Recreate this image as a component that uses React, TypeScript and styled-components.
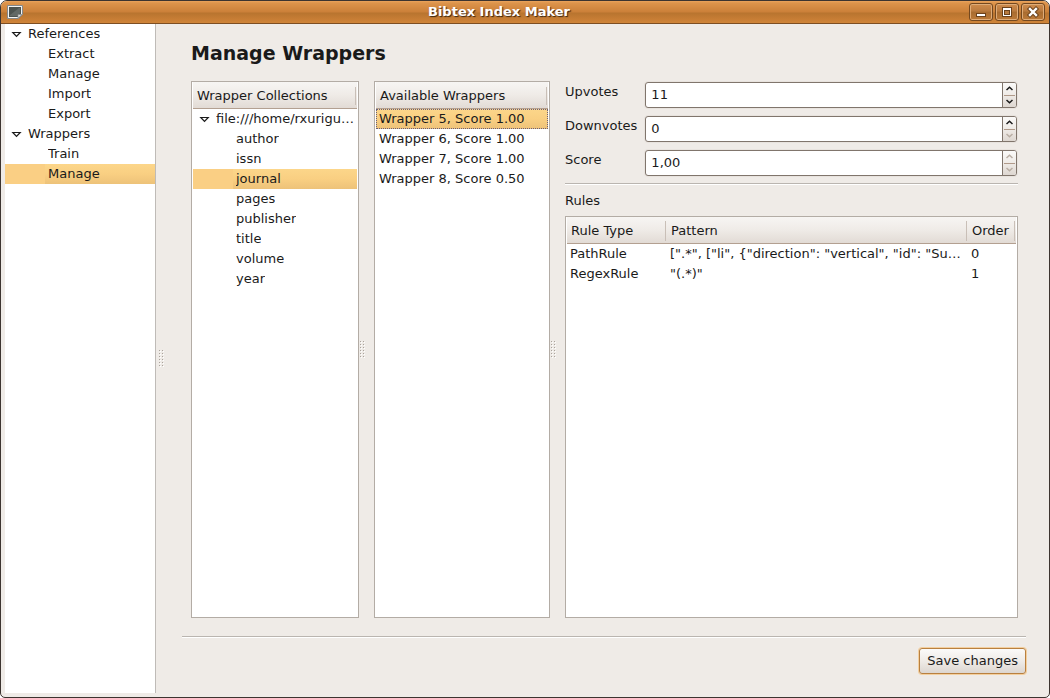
import React, { useState } from "react";
import styled, { createGlobalStyle, css } from "styled-components";

const GlobalStyle = createGlobalStyle`
  *, *::before, *::after { box-sizing: border-box; }
  body { margin: 0; background: #fff; }
  body, button, input, table {
    font-family: "DejaVu Sans", sans-serif;
    font-size: 13px;
    line-height: 20px;
    color: #1a1a1a;
  }
  button { margin: 0; padding: 0; border: 0; background: none; text-align: left; }
`;

const Window = styled.div`
  display: flex;
  flex-direction: column;
  min-height: 100vh;
  border: 1px solid #3c3430;
  border-radius: 7px 7px 5px 5px;
  background: #efebe7;
  overflow: hidden;
`;

const TitleBar = styled.header`
  display: flex;
  align-items: center;
  height: 23px;
  padding: 0 4px 0 6px;
  border-bottom: 1px solid #7d4e22;
  background: linear-gradient(#eaa45c 0, #dd944b 2px, #cb8039 11px, #b8742f 12px, #c97f36 19px, #d08539 22px);
`;

const WindowTitle = styled.div`
  flex: 1;
  padding-left: 6px;
  color: #fff;
  font-weight: bold;
  text-align: center;
  text-shadow: 1px 1px 1px #3a2410;
`;

const WindowButtons = styled.div`
  display: flex;
  gap: 2px;
`;

const WindowButton = styled.button`
  display: flex;
  width: 24px;
  height: 18px;
  border: 1px solid #74481f;
  border-radius: 3px;
  background: linear-gradient(#cf8c4c, #ba7a3e 45%, #a86c30 50%, #bd7a38);
  box-shadow: inset 0 0 0 1px #dfac78;
`;

const Body = styled.div`
  display: flex;
  flex: 1;
  padding: 0 4px 4px 4px;
`;

const Sidebar = styled.nav`
  flex: 0 0 151px;
  border-right: 1px solid #bfbbb7;
  background: #fff;
`;

const Splitter = styled.div<{ $inset: number }>`
  display: flex;
  flex: 0 0 15px;
  align-items: center;
  padding-left: ${(p) => p.$inset}px;
`;

const Content = styled.main`
  display: flex;
  flex: 1;
  flex-direction: column;
  min-width: 0;
  padding: 0 19px 19px 11px;
`;

const Heading = styled.h1`
  margin: 0 0 0 9px;
  padding: 16px 0 15px;
  font-size: 19px;
  line-height: 26px;
`;

const Panes = styled.div`
  display: flex;
  flex: 1;
  margin: 0 8px 18px 9px;
`;

const Panel = styled.section<{ $width?: number }>`
  flex: ${(p) => (p.$width ? `0 0 ${p.$width}px` : "1")};
  min-width: 0;
  border: 1px solid #b3aca5;
  background: #fff;
  padding: 0 1px;
`;

const headerFill = css`
  height: 27px;
  border-bottom: 1px solid #b3a091;
  background: linear-gradient(#f7f5f3, #efebe7 50%, #e2dbd5);
  font-weight: normal;
  text-align: left;
`;

const PanelHeader = styled.h2`
  ${headerFill}
  display: flex;
  align-items: center;
  justify-content: space-between;
  margin: 0;
  padding: 2px 0 0 4px;
  font-size: 13px;
  &::after {
    content: "";
    width: 2px;
    height: 18px;
    border-left: 1px solid #c9bfb7;
  }
`;

const Tree = styled.ul`
  margin: 0;
  padding: 0;
  list-style: none;
`;

const TreeRow = styled.button<{ $level: number; $selected?: boolean }>`
  display: flex;
  align-items: center;
  width: 100%;
  height: 20px;
  padding-left: ${(p) => (p.$level ? 43 : 6)}px;
  white-space: nowrap;
  ${(p) =>
    p.$selected &&
    css`
      background: linear-gradient(#fcd68a, #f9cf82 50%, #edc279) 40px 0 no-repeat #facf84;
    `}
`;

const TreeLabel = styled.span`
  overflow: hidden;
  text-overflow: ellipsis;
`;

const Arrow = styled.svg`
  flex: none;
  width: 11px;
  height: 9px;
  margin-right: 6px;
`;

const ListRow = styled.button<{ $selected?: boolean }>`
  display: block;
  width: 100%;
  height: 20px;
  padding-left: 3px;
  white-space: nowrap;
  ${(p) =>
    p.$selected &&
    css`
      background: linear-gradient(#fcd68a, #f9cf82 50%, #edc279);
      outline: 1px dotted #6b5f78;
      outline-offset: -1px;
    `}
`;

const Details = styled.div`
  display: flex;
  flex: 1;
  flex-direction: column;
  min-width: 0;
`;

const Fields = styled.div`
  display: grid;
  grid-template-columns: auto 1fr;
  gap: 7px 8px;
  padding-bottom: 7px;
`;

const FieldLabel = styled.label`
  padding-top: 1px;
`;

const Spin = styled.div`
  display: flex;
  height: 26px;
  margin: 1px 1px 0 0;
  border: 1px solid #80756c;
  border-radius: 3px;
  background: #fff;
  box-shadow: 0 0 0 1px #e8e3de;
`;

const SpinInput = styled.input`
  flex: 1;
  min-width: 0;
  padding: 0 5px;
  border: 0;
  outline: 0;
  background: transparent;
`;

const SpinButtons = styled.div`
  display: flex;
  flex: 0 0 14px;
  flex-direction: column;
  border-left: 1px solid #80756c;
  border-radius: 0 2px 2px 0;
  background: linear-gradient(#fbfaf9, #efebe7 50%, #ded7d1);
`;

const SpinButton = styled.button`
  display: flex;
  flex: 1;
  align-items: center;
  justify-content: center;
  color: #1a1a1a;
  &:disabled { color: #b9aea4; }
  & + & {
    margin: 0 1px;
    border-top: 1px solid #b09a8a;
  }
`;

const Rule = styled.hr`
  width: 100%;
  height: 2px;
  margin: 0;
  border: 0;
  border-top: 1px solid #bab5b0;
  border-bottom: 1px solid #fff;
`;

const RulesTitle = styled.h2`
  margin: 0;
  padding: 6px 0 5px;
  font-size: 13px;
  font-weight: normal;
`;

const RulesTable = styled.table`
  width: 100%;
  table-layout: fixed;
  border-collapse: separate;
  border-spacing: 0;
`;

const HeadCell = styled.th<{ $width?: number }>`
  ${headerFill}
  width: ${(p) => (p.$width ? `${p.$width}px` : "auto")};
  padding: 2px 1px 0 0;
  & > span {
    display: block;
    height: 20px;
    padding-left: 4px;
    border-right: 1px solid #c9bfb7;
  }
`;

const Cell = styled.td`
  height: 20px;
  padding: 0 5px 0 3px;
  overflow: hidden;
  text-overflow: ellipsis;
  white-space: nowrap;
`;

const Footer = styled.footer`
  display: flex;
  justify-content: flex-end;
  padding-top: 10px;
`;

const SaveButton = styled.button`
  height: 26px;
  padding: 0 7px;
  border: 1px solid #b9803f;
  border-radius: 3px;
  background: linear-gradient(#fbfaf9, #efebe7 50%, #ddd6d0);
  box-shadow: 0 0 0 1px #f3cf9f;
`;

function Grip() {
  return (
    <svg width="5" height="17" aria-hidden="true">
      {[0, 3, 6, 9, 12, 15].map((y) =>
        [0, 3].map((x) => (
          <g key={`${x}-${y}`}>
            <rect x={x + 1} y={y + 1} width="1" height="1" fill="#fff" />
            <rect x={x} y={y} width="1" height="1" fill="#aaa39c" />
          </g>
        ))
      )}
    </svg>
  );
}

function Expander() {
  return (
    <Arrow viewBox="0 0 11 9" aria-hidden="true">
      <path d="M1.8 2.5H9.2L5.5 6.3Z" fill="#fff" stroke="#1a1a1a" strokeWidth="1.2" />
    </Arrow>
  );
}

function AppIcon() {
  return (
    <svg width="16" height="14" viewBox="0 0 16 14" aria-hidden="true">
      <path d="M.5 .5H15.5V9.5L11.5 13.5H.5Z" fill="#f4f4f2" stroke="#85888a" />
      <path d="M2 2H14V9L11 12H2Z" fill="#4c5350" />
      <path d="M3 10L12 3H13V8L11 11H3Z" fill="#626966" />
      <path d="M11 13V9.5H15Z" fill="#dcdedd" stroke="#85888a" strokeWidth=".7" />
    </svg>
  );
}

type Node = { id: string; label: string; level: number };

const sections: Node[] = [
  { id: "references", label: "References", level: 0 },
  { id: "extract", label: "Extract", level: 1 },
  { id: "manage-references", label: "Manage", level: 1 },
  { id: "import", label: "Import", level: 1 },
  { id: "export", label: "Export", level: 1 },
  { id: "wrappers", label: "Wrappers", level: 0 },
  { id: "train", label: "Train", level: 1 },
  { id: "manage-wrappers", label: "Manage", level: 1 },
];

const collections: Node[] = [
  { id: "source", label: "file:///home/rxurigu…", level: 0 },
  ...["author", "issn", "journal", "pages", "publisher", "title", "volume", "year"].map((f) => ({
    id: f,
    label: f,
    level: 1,
  })),
];

const wrappers = [
  "Wrapper 5, Score 1.00",
  "Wrapper 6, Score 1.00",
  "Wrapper 7, Score 1.00",
  "Wrapper 8, Score 0.50",
];

const rules = [
  ["PathRule", '[".*", ["li", {"direction": "vertical", "id": "Su…', "0"],
  ["RegexRule", '"(.*)"', "1"],
];

function TreeView({ nodes, initial }: { nodes: Node[]; initial: string }) {
  const [selected, setSelected] = useState(initial);
  return (
    <Tree>
      {nodes.map((n) => (
        <li key={n.id}>
          <TreeRow
            type="button"
            $level={n.level}
            $selected={n.id === selected}
            onClick={() => setSelected(n.id)}
          >
            {n.level === 0 && <Expander />}
            <TreeLabel>{n.label}</TreeLabel>
          </TreeRow>
        </li>
      ))}
    </Tree>
  );
}

type SpinProps = { id: string; label: string; value: string; canUp?: boolean; canDown?: boolean };

function SpinField({ id, label, value, canUp = false, canDown = false }: SpinProps) {
  return (
    <>
      <FieldLabel htmlFor={id}>{label}</FieldLabel>
      <Spin>
        <SpinInput id={id} defaultValue={value} />
        <SpinButtons>
          <SpinButton type="button" aria-label={`Increase ${label}`} disabled={!canUp}>
            <svg width="7" height="5" viewBox="0 0 7 5">
              <path d="M.5 4L3.5 1.2L6.5 4" fill="none" stroke="currentColor" strokeWidth="1.5" />
            </svg>
          </SpinButton>
          <SpinButton type="button" aria-label={`Decrease ${label}`} disabled={!canDown}>
            <svg width="7" height="5" viewBox="0 0 7 5">
              <path d="M.5 1L3.5 3.8L6.5 1" fill="none" stroke="currentColor" strokeWidth="1.5" />
            </svg>
          </SpinButton>
        </SpinButtons>
      </Spin>
    </>
  );
}

export default function App() {
  const [wrapper, setWrapper] = useState(wrappers[0]);
  return (
    <>
      <GlobalStyle />
      <Window>
        <TitleBar>
          <AppIcon />
          <WindowTitle>Bibtex Index Maker</WindowTitle>
          <WindowButtons>
            <WindowButton type="button" aria-label="Minimize">
              <svg width="22" height="16">
                <rect x="6.5" y="9.5" width="9" height="3" fill="#fff" stroke="#6b421c" />
              </svg>
            </WindowButton>
            <WindowButton type="button" aria-label="Maximize">
              <svg width="22" height="16">
                <rect x="6.5" y="3.5" width="9" height="9" fill="#fff" stroke="#6b421c" />
                <rect x="8.5" y="6.5" width="5" height="4" fill="#b87a3e" stroke="#6b421c" />
              </svg>
            </WindowButton>
            <WindowButton type="button" aria-label="Close">
              <svg width="22" height="16">
                <path d="M8 5L14 11M14 5L8 11" stroke="#6b421c" strokeWidth="4.4" strokeLinecap="square" />
                <path d="M8 5L14 11M14 5L8 11" stroke="#fff" strokeWidth="2.4" strokeLinecap="square" />
              </svg>
            </WindowButton>
          </WindowButtons>
        </TitleBar>
        <Body>
          <Sidebar aria-label="Sections">
            <TreeView nodes={sections} initial="manage-wrappers" />
          </Sidebar>
          <Splitter $inset={3}>
            <Grip />
          </Splitter>
          <Content>
            <Heading>Manage Wrappers</Heading>
            <Panes>
              <Panel $width={168}>
                <PanelHeader>Wrapper Collections</PanelHeader>
                <TreeView nodes={collections} initial="journal" />
              </Panel>
              <Splitter $inset={1}>
                <Grip />
              </Splitter>
              <Panel $width={176}>
                <PanelHeader>Available Wrappers</PanelHeader>
                <Tree>
                  {wrappers.map((w) => (
                    <li key={w}>
                      <ListRow type="button" $selected={w === wrapper} onClick={() => setWrapper(w)}>
                        {w}
                      </ListRow>
                    </li>
                  ))}
                </Tree>
              </Panel>
              <Splitter $inset={1}>
                <Grip />
              </Splitter>
              <Details>
                <Fields>
                  <SpinField id="upvotes" label="Upvotes" value="11" canUp canDown />
                  <SpinField id="downvotes" label="Downvotes" value="0" canUp />
                  <SpinField id="score" label="Score" value="1,00" />
                </Fields>
                <Rule />
                <RulesTitle id="rules-title">Rules</RulesTitle>
                <Panel>
                  <RulesTable aria-labelledby="rules-title">
                    <thead>
                      <tr>
                        <HeadCell $width={100}><span>Rule Type</span></HeadCell>
                        <HeadCell><span>Pattern</span></HeadCell>
                        <HeadCell $width={48}><span>Order</span></HeadCell>
                      </tr>
                    </thead>
                    <tbody>
                      {rules.map((r) => (
                        <tr key={r[0]}>
                          {r.map((c) => (
                            <Cell key={c}>{c}</Cell>
                          ))}
                        </tr>
                      ))}
                    </tbody>
                  </RulesTable>
                </Panel>
              </Details>
            </Panes>
            <Rule />
            <Footer>
              <SaveButton type="button">Save changes</SaveButton>
            </Footer>
          </Content>
        </Body>
      </Window>
    </>
  );
}
